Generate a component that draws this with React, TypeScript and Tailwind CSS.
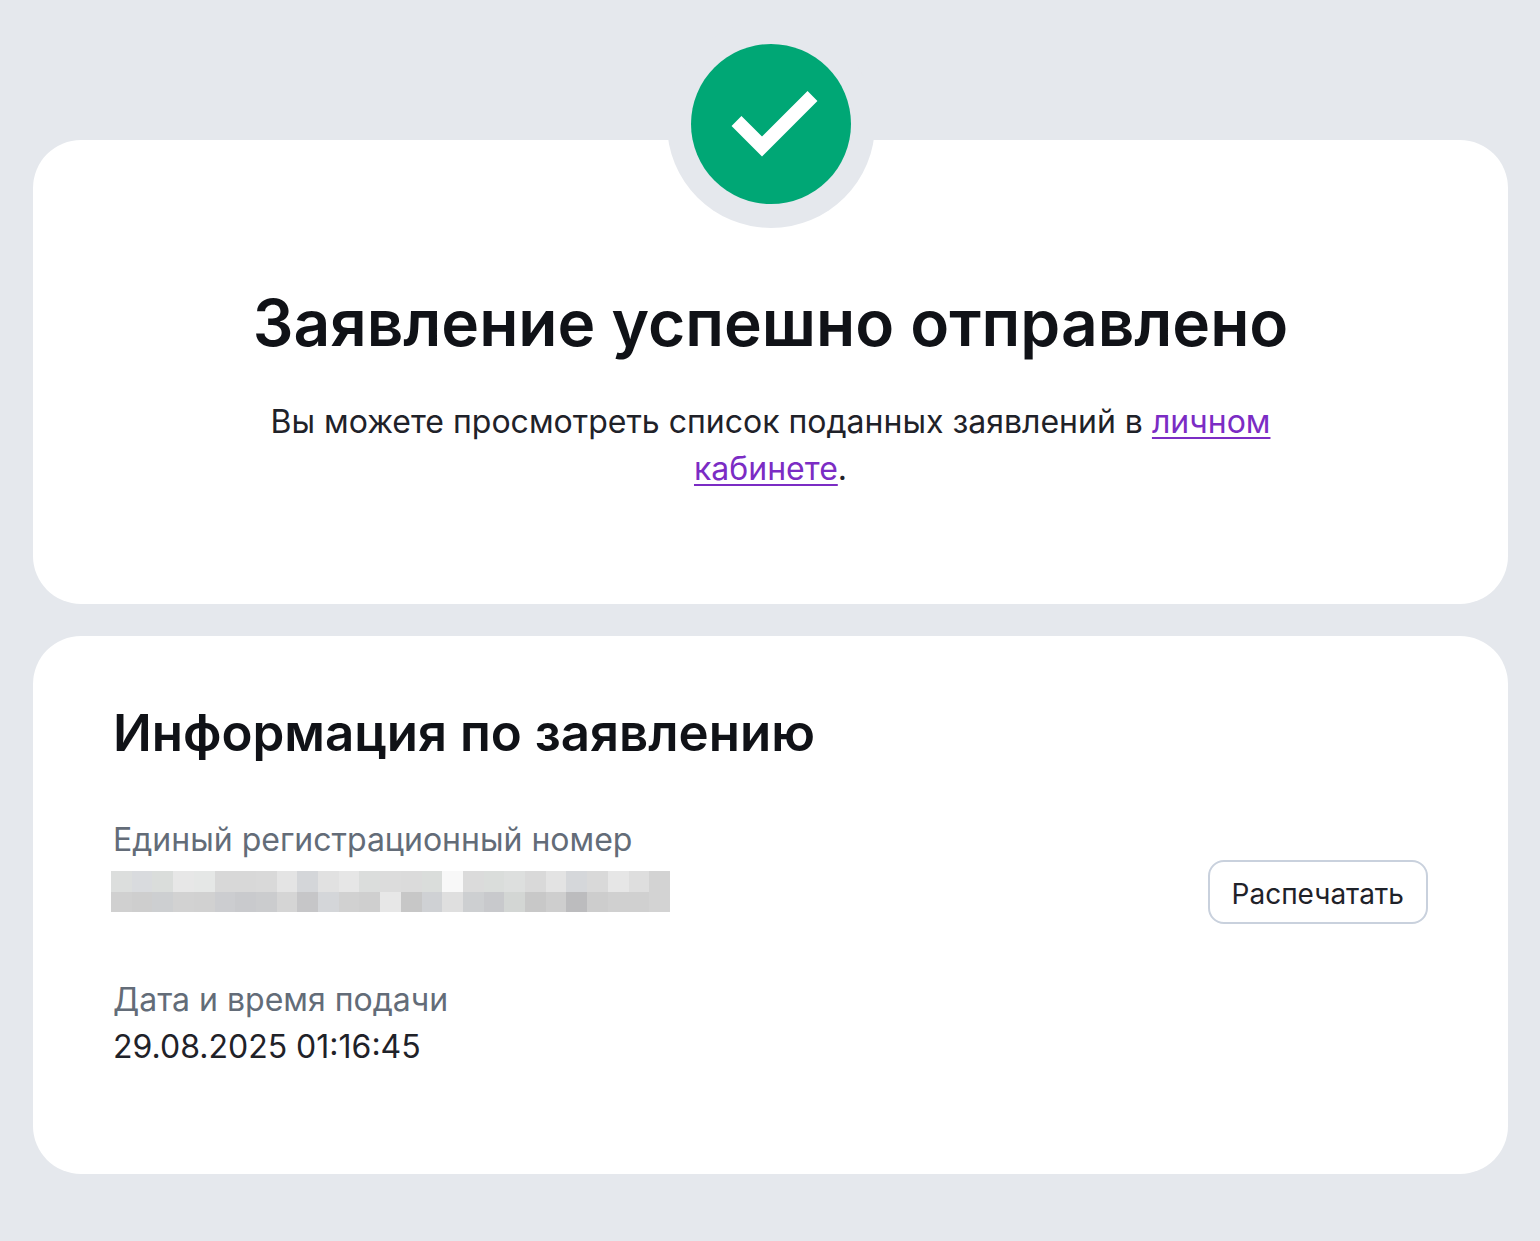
const maskRows = [
  ['#dcdedd', '#d9dbde', '#dadddb', '#e7e7e7', '#e5e7e6', '#d8d8d8', '#d8d8d8', '#d9d9d9', '#e4e4e4', '#d4d6d9', '#e1e1e1', '#e6e6e6', '#dbdddc', '#dcdcdc', '#dbdbdb', '#dadddb', '#f8f8f8', '#dbdbdb', '#dadddb', '#dddfde', '#d9d9d9', '#e3e3e3', '#d5d7da', '#d9d9d9', '#e6e6e6', '#dedede', '#d3d3d3'],
  ['#d0d0d0', '#cecece', '#cdcfd1', '#d2d2d2', '#d1d1d1', '#cccdd0', '#c9cacd', '#cbccce', '#d5d5d5', '#c6c6c8', '#d4d6d9', '#d1d1d1', '#cfcfcf', '#e7e7e7', '#c7c7c7', '#cfd1d4', '#dfdfdf', '#cdcfd1', '#c8c9cc', '#d3d6d4', '#c8c8c8', '#cecece', '#bcbcbe', '#cdcdcd', '#d0d0d0', '#d0d0d0', '#d3d3d3'],
];

export default function App() {
  return (
    <main className="min-h-screen bg-[#e5e8ed] pl-[33px] pr-8 pt-[140px] pb-16 font-['Inter','Liberation_Sans',sans-serif] text-[32px] leading-[47px] text-[#1f2229]">
      <div className="flex flex-col gap-8">
        {/* Result */}
        <section className="flex flex-col items-center rounded-[48px] bg-white px-20 pb-28 text-center">
          <StatusIcon />
          <h1 className="mt-14 text-[64px] leading-[78px] font-semibold text-[#101217]">
            Заявление успешно отправлено
          </h1>
          <p className="mt-9 max-w-[1060px]">
            Вы можете просмотреть список поданных заявлений в{' '}
            <a href="#" className="text-[#7b2cc4] underline decoration-2 underline-offset-4">личном кабинете</a>.
          </p>
        </section>

        {/* Details */}
        <section className="rounded-[48px] bg-white px-20 pt-16 pb-[104px]">
          <h2 className="text-[51px] leading-[66px] font-semibold text-[#101217]">Информация по заявлению</h2>
          <div className="mt-[50px] flex items-start justify-between gap-8">
            <dl className="flex flex-col gap-16">
              <div>
                <dt className="text-[#636c78]">Единый регистрационный номер</dt>
                <dd>
                  <MaskedNumber />
                </dd>
              </div>
              <div>
                <dt className="text-[#636c78]">Дата и время подачи</dt>
                <dd>29.08.2025 01:16:45</dd>
              </div>
            </dl>
            <button
              type="button"
              className="mt-11 h-16 shrink-0 rounded-2xl border-2 border-[#c9d1dd] bg-white px-[22px] pt-1 text-[28px] leading-[40px]"
            >
              Распечатать
            </button>
          </div>
        </section>
      </div>
    </main>
  );
}

function StatusIcon() {
  return (
    <div className="-mt-[120px] rounded-full bg-[#e5e8ed] p-6">
      <svg viewBox="0 0 160 160" className="size-40" aria-hidden="true">
        <circle cx="80" cy="80" r="80" fill="#00a775" />
        <path d="M45.500 77 71 102.500 121.500 52" fill="none" stroke="#fff" strokeWidth="14" />
      </svg>
    </div>
  );
}

function MaskedNumber() {
  return (
    <svg viewBox="0 0 27 2" preserveAspectRatio="none" shapeRendering="crispEdges" className="mt-2 -ml-0.5 h-[41px] w-[559px]" aria-hidden="true">
      {maskRows.map((row, y) =>
        row.map((color, x) => <rect key={`${x}-${y}`} x={x} y={y} width="1" height="1" fill={color} />)
      )}
    </svg>
  );
}
